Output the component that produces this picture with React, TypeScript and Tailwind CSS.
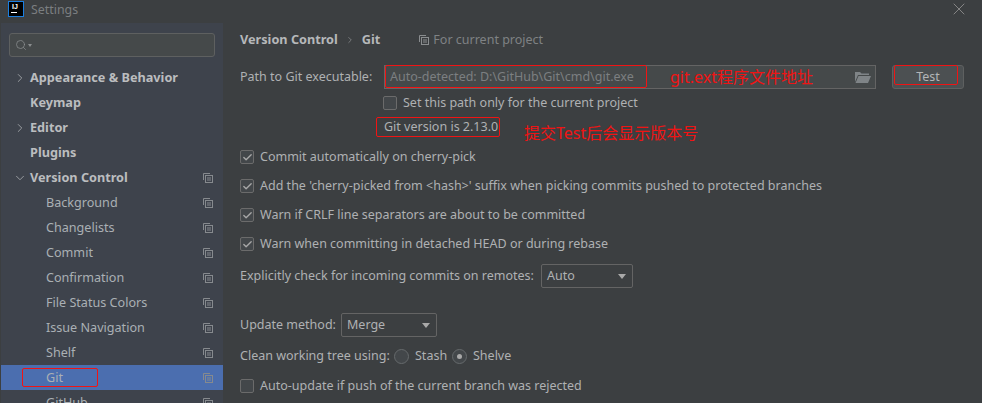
import { Check, ChevronRight, ChevronDown, Search, X } from "lucide-react";

const FONT = "font-['Noto_Sans','Noto_Sans_CJK_SC',sans-serif]";

type NavItem = {
  label: string;
  bold?: boolean;
  arrow?: "right" | "down";
  copy?: boolean;
  active?: boolean;
};

const navItems: NavItem[] = [
  { label: "Appearance & Behavior", bold: true, arrow: "right" },
  { label: "Keymap", bold: true },
  { label: "Editor", bold: true, arrow: "right" },
  { label: "Plugins", bold: true },
  { label: "Version Control", bold: true, arrow: "down", copy: true },
  { label: "Background", copy: true },
  { label: "Changelists", copy: true },
  { label: "Commit", copy: true },
  { label: "Confirmation", copy: true },
  { label: "File Status Colors", copy: true },
  { label: "Issue Navigation", copy: true },
  { label: "Shelf", copy: true },
  { label: "Git", copy: true, active: true },
  { label: "GitHub", copy: true },
];

function CopyIcon({ className }: { className?: string }) {
  return (
    <svg width="10" height="10" viewBox="0 0 10 10" fill="none" stroke="currentColor" className={className}>
      <path d="M0.5 7V0.5H7" />
      <rect x="2.5" y="2.5" width="7" height="7" />
      <path d="M4 5H8M4 7H8" />
    </svg>
  );
}

function IdeaLogo() {
  return (
    <div className="w-4 h-4 bg-black border border-[#1b7fe0] flex flex-col items-center justify-start">
      <span className="text-[7px] leading-[9px] font-bold text-white font-['Liberation_Sans',sans-serif] mr-0.5">IJ</span>
      <span className="w-[6px] h-px bg-white mr-1 mt-px" />
    </div>
  );
}

function SideRow({ item }: { item: NavItem }) {
  return (
    <div className={`relative h-[25px] shrink-0 flex items-center ${item.active ? "bg-[#4b6eaf]" : ""}`}>
      {item.arrow === "right" && <ChevronRight size={14} strokeWidth={1.4} className="absolute left-[12px] text-[#a9adb1]" />}
      {item.arrow === "down" && <ChevronDown size={14} strokeWidth={1.4} className="absolute left-[12px] text-[#a9adb1]" />}
      <span className={`${item.bold ? "ml-[29px] font-bold text-[#bbbdbf] text-[12.7px]" : "ml-[45px] pt-[2px] text-[#aab0b4] text-[12.6px]"} leading-none whitespace-nowrap`}>
        {item.label}
      </span>
      {item.copy && <CopyIcon className="absolute right-[10px] text-[#868a8e]" />}
    </div>
  );
}

function CheckRow({ label, checked, className }: { label: string; checked?: boolean; className?: string }) {
  return (
    <div className={`flex items-center h-[18px] ${className ?? ""}`}>
      <span className="w-[14px] h-[14px] rounded-[2px] border border-[#6b6b6b] bg-[#43474a] flex items-center justify-center shrink-0">
        {checked && <Check size={11} strokeWidth={3} className="text-[#a7a7a7]" />}
      </span>
      <span className="ml-[6px] whitespace-nowrap">{label}</span>
    </div>
  );
}

function Combo({ value, className }: { value: string; className?: string }) {
  return (
    <div className={`h-6 flex items-center justify-between pl-[5px] pr-[4px] border border-[#646464] rounded-[2px] bg-[#3c3f41] ${className ?? ""}`}>
      <span>{value}</span>
      <span className="w-0 h-0 border-x-[4.5px] border-x-transparent border-t-[5px] border-t-[#a9a9a9] mr-[2px]" />
    </div>
  );
}

function Radio({ checked }: { checked?: boolean }) {
  return (
    <span className="w-[15px] h-[15px] rounded-full border border-[#666a6c] bg-[#43474a] flex items-center justify-center shrink-0">
      {checked && <span className="w-[5px] h-[5px] rounded-full bg-[#a9a9a9]" />}
    </span>
  );
}

export default function App() {
  return (
    <div className={`relative w-[982px] h-[403px] overflow-hidden bg-[#3c3f41] text-[#afb1b3] text-[12.5px] ${FONT}`}>
      {/* title bar */}
      <div className="h-[23px] flex items-center relative">
        <div className="ml-[8px] -mt-[5px]">
          <IdeaLogo />
        </div>
        <span className="ml-[7px] -mt-[3px] text-[12.4px] text-[#7b7e80]">Settings</span>
        <X size={20} strokeWidth={1.1} className="absolute left-[949px] -top-px text-[#8c8c8c]" />
      </div>

      <div className="flex h-[380px]">
        {/* sidebar */}
        <aside className="w-[222px] ml-px bg-[#3e434c] flex flex-col overflow-hidden">
          <div className="mt-[10px] mx-[8px] h-6 shrink-0 rounded-[3px] border border-[#5e6060] bg-[#45494a] flex items-center pl-[5px] text-[#8a8d8f]">
            <Search size={12} strokeWidth={1.5} />
            <span className="w-0 h-0 ml-px mt-px border-x-[2.5px] border-x-transparent border-t-[3px] border-t-[#8a8d8f]" />
          </div>
          <div className="mt-[8px] flex flex-col">
            {navItems.map((item) => (
              <SideRow key={item.label} item={item} />
            ))}
          </div>
        </aside>

        {/* main */}
        <main className="flex-1 pl-[17px] pr-[18px] flex flex-col">
          <div className="mt-[8px] h-[18px] flex items-center whitespace-nowrap">
            <span className="font-bold text-[12.7px] text-[#b6b8ba]">Version Control</span>
            <ChevronRight size={10} strokeWidth={1.4} className="ml-[7px] text-[#a0a2a4]" />
            <span className="ml-[7px] font-bold text-[12.7px] text-[#b6b8ba]">Git</span>
            <CopyIcon className="ml-[39px] text-[#8a8d8f]" />
            <span className="ml-[4px] text-[#7f8284]">For current project</span>
          </div>

          <div className="mt-[16px] flex items-center h-6">
            <span className="w-[144px] whitespace-nowrap">Path to Git executable:</span>
            <div className="w-[492px] h-[24px] border border-[#646464] bg-[#45494a] flex items-center justify-between pl-[5px] pr-[4px]">
              <span className="text-[#7c7f81] whitespace-nowrap">Auto-detected: D:\GitHub\Git\cmd\git.exe</span>
              <svg width="16" height="12" viewBox="0 0 16 12" fill="#7f8487">
                <path d="M0 1h5l1.5 1.5H14V4H3L0 11z" />
                <path d="M3.5 5H16l-3 7H0.5z" />
              </svg>
            </div>
            <button className="ml-[16px] w-[72px] h-6 rounded-[3px] border border-[#5e6060] bg-[#4c5052] text-[#b3b5b7]">Test</button>
          </div>

          <CheckRow label="Set this path only for the current project" className="ml-[143px] mt-[5px]" />
          <div className="ml-[144px] mt-[6px] h-[18px] flex items-center whitespace-nowrap">Git version is 2.13.0</div>

          <CheckRow label="Commit automatically on cherry-pick" checked className="mt-[12px]" />
          <CheckRow label="Add the 'cherry-picked from <hash>' suffix when picking commits pushed to protected branches" checked className="mt-[11px]" />
          <CheckRow label="Warn if CRLF line separators are about to be committed" checked className="mt-[11px]" />
          <CheckRow label="Warn when committing in detached HEAD or during rebase" checked className="mt-[11px]" />

          <div className="mt-[11px] flex items-center h-6">
            <span className="w-[301px] whitespace-nowrap">Explicitly check for incoming commits on remotes:</span>
            <Combo value="Auto" className="w-[92px]" />
          </div>

          <div className="mt-[25px] flex items-center h-6">
            <span className="w-[101px] whitespace-nowrap">Update method:</span>
            <Combo value="Merge" className="w-[96px]" />
          </div>

          <div className="mt-[10px] flex items-center h-[18px] whitespace-nowrap">
            <span className="w-[154px]">Clean working tree using:</span>
            <Radio />
            <span className="ml-[6px] w-[37px]">Stash</span>
            <Radio checked />
            <span className="ml-[6px]">Shelve</span>
          </div>

          <CheckRow label="Auto-update if push of the current branch was rejected" className="mt-[12px]" />
        </main>
      </div>

      {/* red annotations drawn on top of the screenshot */}
      <div className="absolute left-[22px] top-[368px] w-[76px] h-[19px] border border-[#f01414] rounded-[2px]" />
      <div className="absolute left-[385px] top-[65px] w-[262px] h-[23px] border border-[#f01414] rounded-[2px]" />
      <div className="absolute left-[376px] top-[117px] w-[124px] h-[20px] border border-[#f01414] rounded-[2px]" />
      <div className="absolute left-[894px] top-[65px] w-[64px] h-[20px] border border-[#f01414] rounded-[2px]" />
      <span className="absolute left-[670px] top-[66px] text-[16px] leading-[22px] text-[#f01414] whitespace-nowrap">git.ext程序文件地址</span>
      <span className="absolute left-[524px] top-[122px] text-[16px] leading-[22px] text-[#f01414] whitespace-nowrap">提交Test后会显示版本号</span>
    </div>
  );
}
